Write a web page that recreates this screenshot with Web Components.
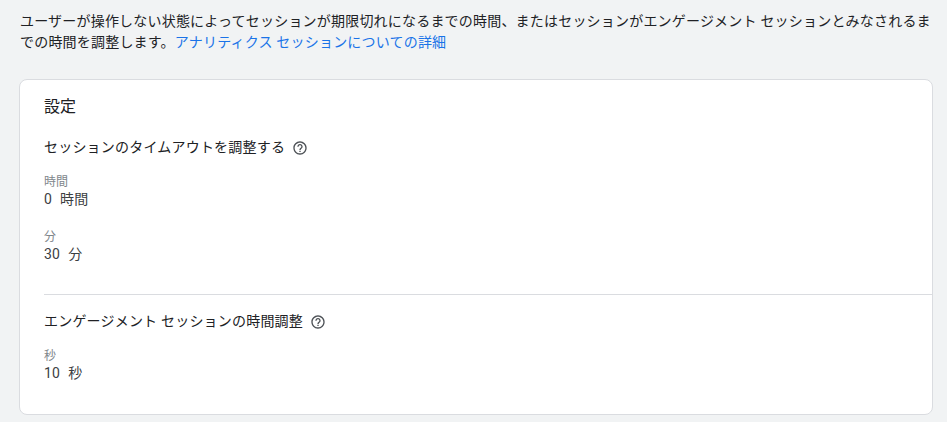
<!DOCTYPE html>
<html lang="ja">
<head>
<meta charset="utf-8">
<title>設定</title>
<style>
    html, body {
        margin: 0;
        height: 100%;
        overflow: hidden;
        background: #f1f3f4;
    }
    body {
        font-family: Roboto, 'Noto Sans CJK JP', sans-serif;
        color: #202124;
    }
</style>
</head>
<body>
<session-page>
    <span slot="intro">ユーザーが操作しない状態によってセッションが期限切れになるまでの時間、またはセッションがエンゲージメント セッションとみなされるまでの時間を調整します。</span>
    <a slot="link" href="#">アナリティクス セッションについての詳細</a>
    <settings-card heading="設定">
        <setting-section heading="セッションのタイムアウトを調整する">
            <setting-field label="時間" value="0" unit="時間"></setting-field>
            <setting-field label="分" value="30" unit="分"></setting-field>
        </setting-section>
        <setting-section heading="エンゲージメント セッションの時間調整" divided>
            <setting-field label="秒" value="10" unit="秒"></setting-field>
        </setting-section>
    </settings-card>
</session-page>

<script>
const pageTemplate = document.createElement('template');
pageTemplate.innerHTML = `
<style>
    :host {
        display: block;
        padding: 11px 14px 0 19px;
    }
    p {
        margin: 0 0 26px 1px;
        font-size: 14px;
        line-height: 21px;
        letter-spacing: .2px;
    }
    ::slotted(a) {
        color: #1a73e8;
        text-decoration: none;
    }
</style>
<p><slot name="intro"></slot><slot name="link"></slot></p>
<slot></slot>
`;

class SessionPage extends HTMLElement {
    constructor() {
        super();
        this.attachShadow({ mode: 'open' });
        this.shadowRoot.appendChild(pageTemplate.content.cloneNode(true));
    }
}

const cardTemplate = document.createElement('template');
cardTemplate.innerHTML = `
<style>
    :host {
        display: block;
        box-sizing: border-box;
        height: 336px;
        padding: 15px 0 0 24px;
        background: #fff;
        border: 1px solid #dadce0;
        border-radius: 8px;
    }
    h2 {
        margin: 0 0 18px;
        font-size: 16px;
        font-weight: 400;
        line-height: 24px;
    }
</style>
<h2></h2>
<slot></slot>
`;

class SettingsCard extends HTMLElement {
    constructor() {
        super();
        this.attachShadow({ mode: 'open' });
        this.shadowRoot.appendChild(cardTemplate.content.cloneNode(true));
        this.shadowRoot.querySelector('h2').innerText = this.getAttribute('heading');
    }
}

const sectionTemplate = document.createElement('template');
sectionTemplate.innerHTML = `
<style>
    :host {
        display: block;
    }
    :host([divided]) {
        margin-top: 31px;
        padding-top: 16px;
        border-top: 1px solid #dadce0;
    }
    h3 {
        display: flex;
        align-items: center;
        gap: 7px;
        margin: 0 0 17px;
        font-size: 14px;
        font-weight: 400;
        line-height: 20px;
        letter-spacing: .2px;
    }
    svg {
        width: 16px;
        height: 16px;
        margin-top: 1px;
        fill: #4d5156;
    }
    .fields {
        display: flex;
        flex-direction: column;
        gap: 21px;
    }
</style>
<h3>
    <span></span>
    <svg viewBox="0 0 24 24"><path d="M11 18h2v-2h-2v2zm1-16C6.48 2 2 6.48 2 12s4.48 10 10 10 10-4.48 10-10S17.52 2 12 2zm0 18c-4.41 0-8-3.59-8-8s3.59-8 8-8 8 3.59 8 8-3.59 8-8 8zm0-14c-2.21 0-4 1.79-4 4h2c0-1.1.9-2 2-2s2 .9 2 2c0 2-3 1.75-3 5h2c0-2.25 3-2.5 3-5 0-2.21-1.79-4-4-4z"/></svg>
</h3>
<div class="fields"><slot></slot></div>
`;

class SettingSection extends HTMLElement {
    constructor() {
        super();
        this.attachShadow({ mode: 'open' });
        this.shadowRoot.appendChild(sectionTemplate.content.cloneNode(true));
        this.shadowRoot.querySelector('span').innerText = this.getAttribute('heading');
    }
}

const fieldTemplate = document.createElement('template');
fieldTemplate.innerHTML = `
<style>
    :host {
        display: block;
    }
    .label {
        font-size: 12px;
        line-height: 16px;
        color: #80868b;
    }
    .value {
        display: flex;
        gap: 8px;
        font-size: 14px;
        line-height: 18px;
        letter-spacing: .2px;
        color: #3c4043;
    }
</style>
<div class="label"></div>
<div class="value"><span class="num"></span><span class="unit"></span></div>
`;

class SettingField extends HTMLElement {
    constructor() {
        super();
        this.attachShadow({ mode: 'open' });
        this.shadowRoot.appendChild(fieldTemplate.content.cloneNode(true));
        this.shadowRoot.querySelector('.label').innerText = this.getAttribute('label');
        this.shadowRoot.querySelector('.num').innerText = this.getAttribute('value');
        this.shadowRoot.querySelector('.unit').innerText = this.getAttribute('unit');
    }
}

window.customElements.define('session-page', SessionPage);
window.customElements.define('settings-card', SettingsCard);
window.customElements.define('setting-section', SettingSection);
window.customElements.define('setting-field', SettingField);
</script>
</body>
</html>
